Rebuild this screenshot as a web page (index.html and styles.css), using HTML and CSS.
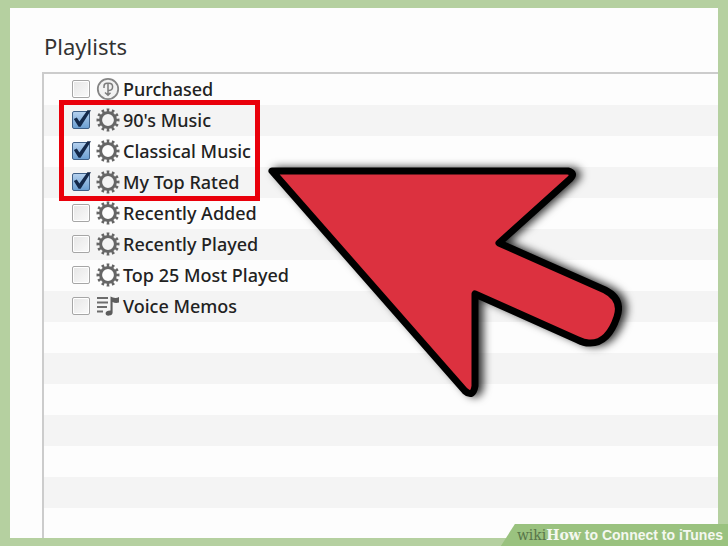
FILE: index.html
```html
<!DOCTYPE html>
<html lang="en">
<head>
    <meta charset="UTF-8">
    <meta name="viewport" content="width=device-width, initial-scale=1.0">
    <title>Playlists</title>
    <link rel="stylesheet" href="styles.css">
</head>
<body>
    <!-- shared icons -->
    <svg class="icon-defs" aria-hidden="true">
        <symbol id="gear" viewBox="0 0 24 24">
            <circle cx="12" cy="12" r="9.5" fill="none" stroke="#666" stroke-width="4" stroke-dasharray="2 2" stroke-dashoffset="1" pathLength="48"/>
            <circle cx="12" cy="12" r="7.4" fill="none" stroke="#666" stroke-width="3"/>
        </symbol>
        <symbol id="purchased" viewBox="0 0 24 24">
            <circle cx="12" cy="12" r="10.2" fill="#f2f2f2" stroke="#858585" stroke-width="1.8"/>
            <path d="M12 6.3V17.5M8 11V9.2Q8 6.2 11 6.2H13Q16.6 6.2 16.6 9.8T13 13.4H12M9 15.5L12 18.3L14.5 15.7" fill="none" stroke="#7c7c7c" stroke-width="1.5"/>
        </symbol>
        <symbol id="memo" viewBox="0 0 24 24">
            <path d="M1 4H12M1 8.5H12M1 13H11M1 17.5H7" stroke="#6c6c6c" stroke-width="1.8"/>
            <path d="M14.5 2.5Q19 5 23 3V8.5Q19.5 9.5 16.6 8V18.5Q16.5 21.3 13 21.6T9.6 19Q10 16.3 14.5 16.4Z" fill="#5c5c5c"/>
        </symbol>
    </svg>

    <main class="panel">
        <h1 class="title">Playlists</h1>
        <ul class="playlists">
            <li><label class="playlist"><input type="checkbox"><svg class="icon"><use href="#purchased"/></svg><span>Purchased</span></label></li>
            <li><label class="playlist"><input type="checkbox" checked><svg class="icon"><use href="#gear"/></svg><span>90's Music</span></label></li>
            <li><label class="playlist"><input type="checkbox" checked><svg class="icon"><use href="#gear"/></svg><span>Classical Music</span></label></li>
            <li><label class="playlist"><input type="checkbox" checked><svg class="icon"><use href="#gear"/></svg><span>My Top Rated</span></label></li>
            <li><label class="playlist"><input type="checkbox"><svg class="icon"><use href="#gear"/></svg><span>Recently Added</span></label></li>
            <li><label class="playlist"><input type="checkbox"><svg class="icon"><use href="#gear"/></svg><span>Recently Played</span></label></li>
            <li><label class="playlist"><input type="checkbox"><svg class="icon"><use href="#gear"/></svg><span>Top 25 Most Played</span></label></li>
            <li><label class="playlist"><input type="checkbox"><svg class="icon"><use href="#memo"/></svg><span>Voice Memos</span></label></li>
        </ul>

        <div class="highlight"></div>
        <svg class="pointer" viewBox="0 0 380 250" aria-hidden="true">
            <path d="M12 21H308Q316 23 310 29L239 93L345 140Q363 149 357 167Q348 194 329 193Q324 193 318 190L215 144V236Q213 248 205 241Z"/>
        </svg>
    </main>

    <footer class="caption"><span class="wiki">wiki</span><span class="how">How</span> to Connect to iTunes</footer>
</body>
</html>
```

FILE: styles.css
```css
* {
    box-sizing: border-box;
}

body {
    margin: 0;
    min-height: 100vh;
    padding: 8px 10px;
    display: flex;
    background: #b5d0a0;
    color: #222;
    font-family: "Noto Sans", "Open Sans", sans-serif;
    position: relative;
}

.icon-defs {
    position: absolute;
    width: 0;
    height: 0;
}

.panel {
    flex: 1;
    display: flex;
    flex-direction: column;
    padding: 21px 0 0 32px;
    background: #fdfdfd;
    position: relative;
}

.title {
    margin: 0 0 9px 2px;
    font-size: 22px;
    line-height: 34px;
    font-weight: 400;
    color: #333;
}

.playlists {
    flex: 1;
    margin: 0;
    padding: 0;
    list-style: none;
    border-top: 2px solid #ccc;
    border-left: 2px solid #ccc;
    background: repeating-linear-gradient(#fdfdfd 0 31px, #f4f4f4 31px 62px);
}

.playlist {
    display: flex;
    align-items: center;
    height: 31px;
    padding: 0 0 2px 28px;
    font-size: 18px;
    font-weight: 500;
}

.playlist input {
    appearance: none;
    width: 18px;
    height: 18px;
    margin: 0 6px 0 0;
    border: 1px solid #a6a6a6;
    border-radius: 2px;
    background: linear-gradient(135deg, #e6e6e6, #fafafa);
    box-shadow: inset 0 0 0 1px #fff;
}

.playlist input:checked {
    border-color: #3f6088;
    background: linear-gradient(#b4d0ee, #6c9fd2);
    box-shadow: none;
    position: relative;
}

.playlist input:checked::after {
    content: "";
    position: absolute;
    inset: -2px;
    background: #14294a;
    clip-path: polygon(14% 48%, 29% 40%, 42% 60%, 82% 4%, 100% 4%, 48% 86%, 38% 86%);
}

.icon {
    width: 24px;
    height: 24px;
    margin-right: 3px;
}

/* box around the ticked playlists */
.highlight {
    position: absolute;
    left: 49px;
    top: 92px;
    width: 201px;
    height: 101px;
    border: 5px solid #e9000b;
}

.pointer {
    position: absolute;
    left: 250px;
    top: 142px;
    width: 380px;
    height: 250px;
    overflow: visible;
    fill: #dc313f;
    stroke: #000;
    stroke-width: 7;
    stroke-linejoin: round;
    filter: drop-shadow(5px 0 4px rgba(0, 0, 0, 0.8));
}

.caption {
    position: absolute;
    right: 0;
    bottom: 0;
    padding: 0 5px 0 16px;
    background: #9ac27f;
    clip-path: polygon(14px 0, 100% 0, 100% 100%, 0 100%);
    color: #f4f8f0;
    font: bold 14px/22px "Liberation Sans", Arial, sans-serif;
}

.wiki,
.how {
    font-family: "DejaVu Serif", serif;
}

.wiki {
    color: #58764a;
    font-weight: 400;
}
```
